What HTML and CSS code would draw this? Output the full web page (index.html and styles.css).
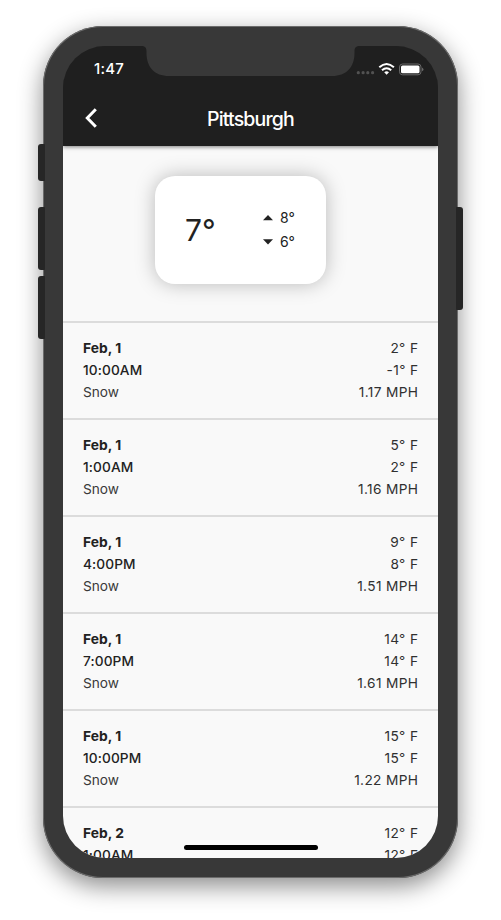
FILE: index.html
```html
<!DOCTYPE html>
<html lang="en">
<head>
<meta charset="utf-8">
<title>Pittsburgh</title>
<link rel="stylesheet" href="styles.css">
</head>
<body>
<div class="phone">
  <i class="button mute"></i><i class="button volume-up"></i><i class="button volume-down"></i><i class="button power"></i>
  <div class="screen">
    <header class="header">
      <svg class="notch" viewBox="0 0 219 30"><path d="M0 0C4 0 5.500 1.500 5.500 5.500V7C5.500 21 13.500 30 28 30H191C205.500 30 213.500 21 213.500 7V5.500C213.500 1.500 215 0 219 0Z"/></svg>
      <div class="status">
        <span class="clock">1:47</span>
        <svg class="indicators" viewBox="0 0 68 14">
          <g fill="#525252"><circle cx="2.300" cy="9.700" r="1.600"/><circle cx="7.100" cy="9.700" r="1.600"/><circle cx="11.800" cy="9.700" r="1.600"/><circle cx="16.600" cy="9.700" r="1.600"/></g>
          <g fill="none" stroke="#fff" stroke-width="2"><path d="M23.300 4.300Q30.600-2.200 37.900 4.300"/><path d="M26 7.200Q30.600 3.200 35.200 7.200"/></g>
          <path fill="#fff" d="M28.200 9.200Q30.600 7.300 33 9.200L30.600 11.700Z"/>
          <rect x="43.500" y="1" width="21.500" height="10.800" rx="3" fill="none" stroke="#686868"/>
          <rect x="45" y="2.500" width="18.500" height="7.800" rx="1.500" fill="#fff"/>
          <path d="M66 4.500Q69 6.400 66 8.300Z" fill="#686868"/>
        </svg>
      </div>
      <div class="nav">
        <svg class="back" viewBox="0 0 14 20"><path d="M11.800 1.300L3.300 10L11.800 18.700" fill="none" stroke="#fff" stroke-width="3"/></svg>
        <h1>Pittsburgh</h1>
      </div>
    </header>
    <main>
      <section class="current">
        <div class="card">
          <span class="now">7°</span>
          <div class="range">
            <div><svg viewBox="0 0 10 6"><path d="M0 5.300L5 0L10 5.300Z"/></svg><span>8°</span></div>
            <div><svg viewBox="0 0 10 6"><path d="M0 .3L5 5.600L10 .3Z"/></svg><span>6°</span></div>
          </div>
        </div>
      </section>
      <section class="forecast">
        <article><div><b>Feb, 1</b><span class="time">10:00AM</span><span class="sky">Snow</span></div><div class="values"><span>2° F</span><span>-1° F</span><span>1.17 MPH</span></div></article>
        <article><div><b>Feb, 1</b><span class="time">1:00AM</span><span class="sky">Snow</span></div><div class="values"><span>5° F</span><span>2° F</span><span>1.16 MPH</span></div></article>
        <article><div><b>Feb, 1</b><span class="time">4:00PM</span><span class="sky">Snow</span></div><div class="values"><span>9° F</span><span>8° F</span><span>1.51 MPH</span></div></article>
        <article><div><b>Feb, 1</b><span class="time">7:00PM</span><span class="sky">Snow</span></div><div class="values"><span>14° F</span><span>14° F</span><span>1.61 MPH</span></div></article>
        <article><div><b>Feb, 1</b><span class="time">10:00PM</span><span class="sky">Snow</span></div><div class="values"><span>15° F</span><span>15° F</span><span>1.22 MPH</span></div></article>
        <article><div><b>Feb, 2</b><span class="time">1:00AM</span></div><div class="values"><span>12° F</span><span>12° F</span></div></article>
      </section>
    </main>
    <i class="home"></i>
  </div>
</div>
</body>
</html>
```
FILE: styles.css
```css
* { box-sizing: border-box; }
html, body { height: 100%; overflow: hidden; }
body { margin: 0; padding: 26px 43px; background: #fff; color: #222; font: 14px/22px Inter, sans-serif; }
.phone { position: relative; width: 415px; height: 852px; padding: 20px; border-radius: 60px; background: #383838; box-shadow: inset 0 0 0 1px #6b6b6b, 0 8px 24px rgba(0,0,0,.46); }
.button { position: absolute; left: -5px; width: 7px; border-radius: 3px 1px 1px 3px; background: #262626; }
.mute { top: 118px; height: 37px; }
.volume-up { top: 181px; height: 63px; }
.volume-down { top: 250px; height: 63px; }
.power { left: auto; right: -5px; top: 181px; height: 103px; border-radius: 1px 3px 3px 1px; }
.screen { position: relative; width: 375px; height: 812px; border-radius: 42px; overflow: hidden; }
.header { position: relative; z-index: 1; height: 100px; background: #1f1f1f; color: #fff; box-shadow: 0 1px 4px rgba(0,0,0,.5); }
main { background: #f9f9f9; }
.notch { position: absolute; left: 78px; top: 0; width: 219px; height: 30px; fill: #383838; }
.status { display: flex; justify-content: space-between; height: 44px; padding: 12px 14px 0 31px; }
.clock { font-size: 15px; font-weight: 500; letter-spacing: .2px; }
.indicators { width: 68px; height: 14px; margin-top: 5px; }
.nav { display: grid; grid-template-columns: 60px 1fr 60px; align-items: center; height: 56px; }
.back { width: 14px; height: 20px; margin-left: 21px; }
h1 { margin: 0; padding-top: 1px; text-align: center; white-space: nowrap; font-size: 19.5px; line-height: 24px; font-weight: 450; letter-spacing: -.85px; }
.current { height: 175px; padding-top: 30px; }
.card { display: flex; justify-content: space-between; align-items: center; width: 171px; height: 108px; margin-left: 92px; padding: 0 31px 0 30px; border-radius: 20px; background: #fff; box-shadow: 0 0 20px rgba(0,0,0,.26); }
.now { font-size: 30px; line-height: 40px; }
.range div { display: flex; align-items: center; gap: 7px; height: 24px; }
.range svg { width: 10px; height: 6px; fill: #222; }
article { display: flex; justify-content: space-between; height: 97px; padding: 14px 20px 15px; border-top: 2px solid #dcdcdc; }
article span, article b { display: block; }
article b { font-size: 13.8px; font-weight: 700; letter-spacing: .05px; }
.time { font-size: 13.7px; font-weight: 450; letter-spacing: .1px; }
.sky { color: #3a3a3a; font-size: 13.7px; }
.values { text-align: right; color: #303030; font-size: 13.7px; letter-spacing: .35px; }
.values span { margin-right: -.35px; }
.home { position: absolute; z-index: 2; left: 120.5px; bottom: 8px; width: 134px; height: 5px; border-radius: 3px; background: #000; }
```
